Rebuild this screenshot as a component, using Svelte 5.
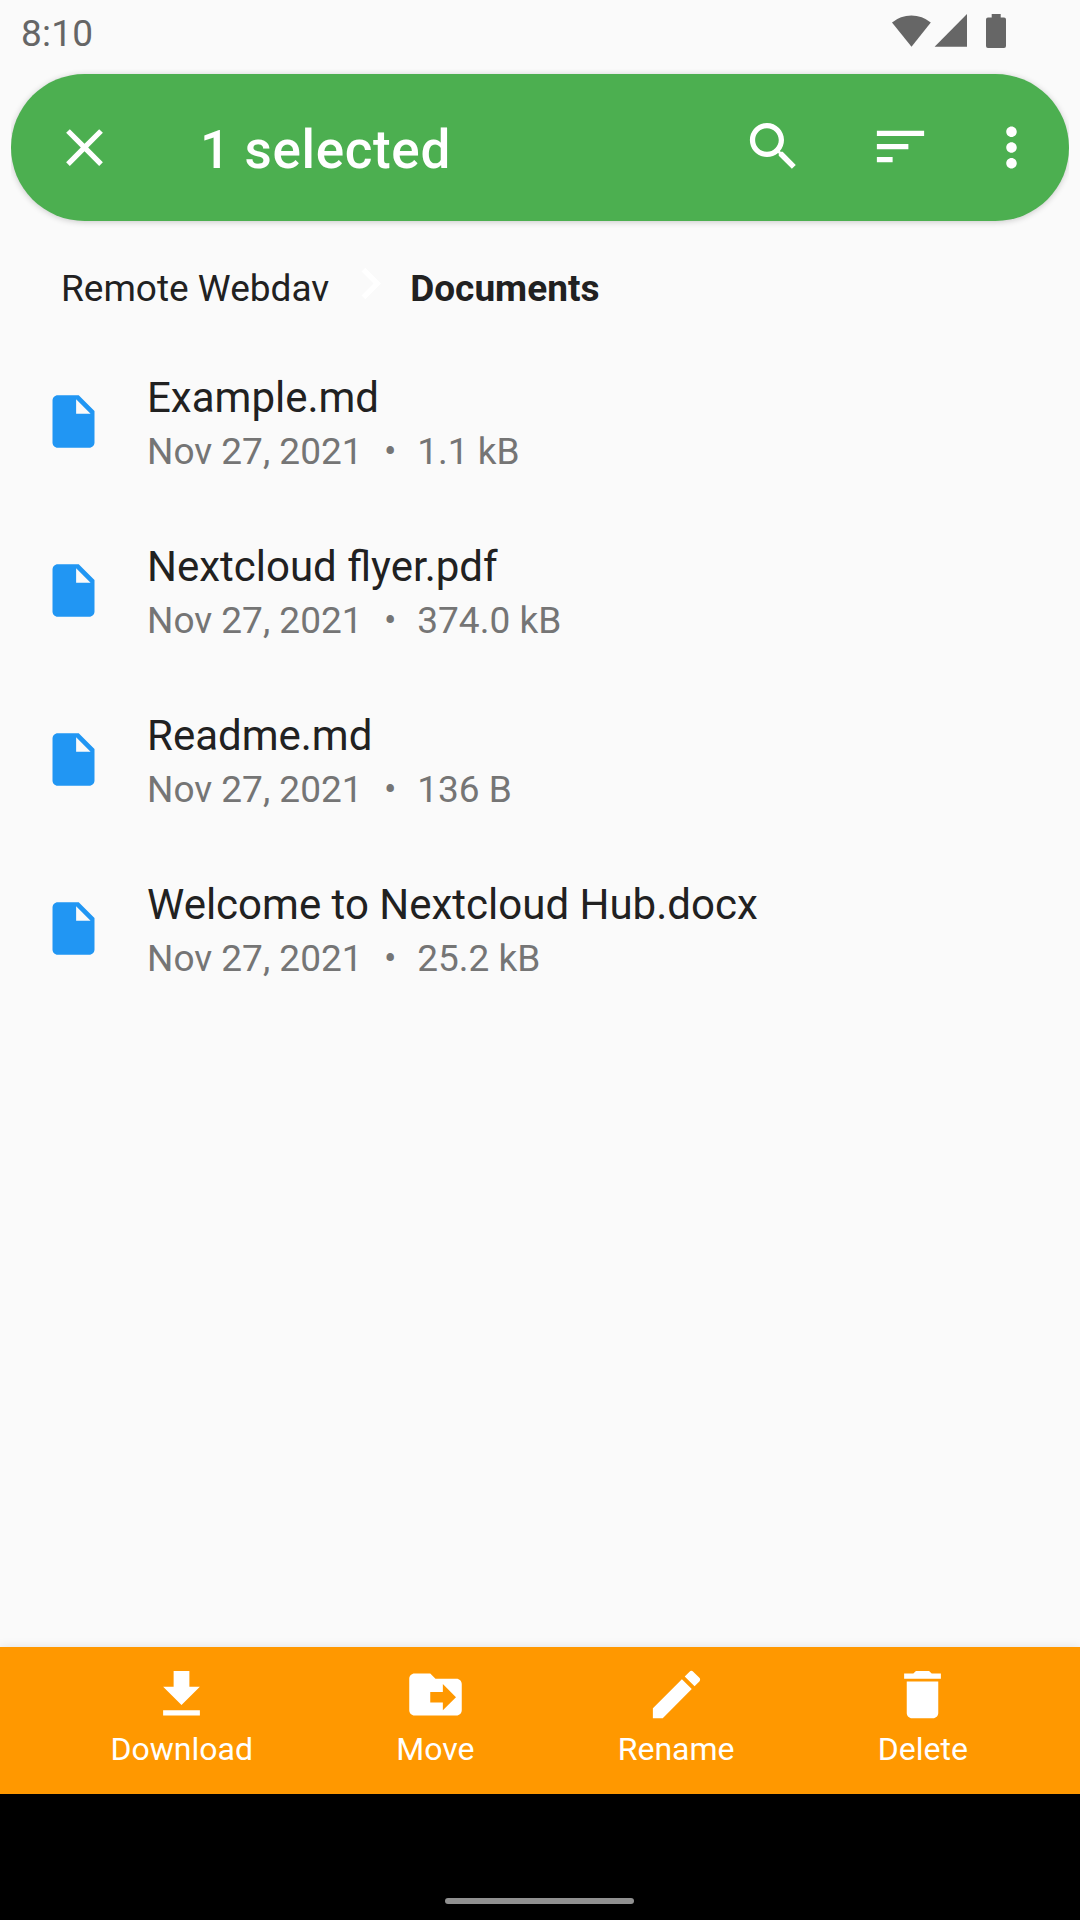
<script>
  const files = [
    { name: 'Example.md', date: 'Nov 27, 2021', size: '1.1 kB' },
    { name: 'Nextcloud flyer.pdf', date: 'Nov 27, 2021', size: '374.0 kB' },
    { name: 'Readme.md', date: 'Nov 27, 2021', size: '136 B' },
    { name: 'Welcome to Nextcloud Hub.docx', date: 'Nov 27, 2021', size: '25.2 kB' },
  ];

  const actions = [
    { label: 'Download', path: 'M19 9h-4V3H9v6H5l7 7 7-7zM5 18v2h14v-2H5z' },
    { label: 'Move', path: 'M20 6h-8l-2-2H4c-1.1 0-2 .9-2 2v12c0 1.1.9 2 2 2h16c1.1 0 2-.9 2-2V8c0-1.1-.9-2-2-2zm-5.2 12v-3H10v-4h4.8V8l5 5-5 5z' },
    { label: 'Rename', path: 'M3 17.25V21h3.75L17.81 9.94l-3.75-3.75L3 17.25zM20.71 7.04c.39-.39.39-1.02 0-1.41l-2.34-2.34c-.39-.39-1.02-.39-1.41 0l-1.83 1.83 3.75 3.75 1.83-1.83z' },
    { label: 'Delete', path: 'M6 19c0 1.1.9 2 2 2h8c1.1 0 2-.9 2-2V7H6v12zM19 4h-3.5l-1-1h-5l-1 1H5v2h14V4z' },
  ];
</script>

<div class="screen">
  <header class="status">
    <span class="time">8:10</span>
    <svg class="indicators" width="114" height="34" viewBox="0 0 114 34">
      <path d="M0 8.6A30 30 0 0 1 38.8 8.6L19.5 32.7z" />
      <path d="M42.6 32.7L75 0v32.7z" />
      <path d="M99.7 0h9v3.4h3.3q2 0 2 2V32q0 2-2 2H96q-2 0-2-2V5.4q0-2 2-2h3.7z" />
    </svg>
  </header>

  <div class="toolbar-clip">
    <div class="toolbar">
      <svg class="icon close" viewBox="0 0 24 24"><path d="M19 6.41L17.59 5 12 10.59 6.41 5 5 6.41 10.59 12 5 17.59 6.41 19 12 13.41 17.59 19 19 17.59 13.41 12z" /></svg>
      <h1>1 selected</h1>
      <svg class="icon search" viewBox="0 0 24 24"><path d="M15.5 14h-.79l-.28-.27C15.41 12.59 16 11.11 16 9.5 16 5.91 13.09 3 9.5 3S3 5.91 3 9.5 5.91 16 9.5 16c1.61 0 3.09-.59 4.23-1.57l.27.28v.79l5 4.99L20.49 19l-4.99-5zm-6 0C7.01 14 5 11.99 5 9.5S7.01 5 9.5 5 14 7.01 14 9.5 11.99 14 9.5 14z" /></svg>
      <svg class="icon sort" viewBox="0 0 24 24"><path d="M3 6h18v2H3zM3 11h12v2H3zM3 16h6v2H3z" /></svg>
      <svg class="icon more" viewBox="0 0 24 24"><path d="M12 8c1.1 0 2-.9 2-2s-.9-2-2-2-2 .9-2 2 .9 2 2 2zm0 2c-1.1 0-2 .9-2 2s.9 2 2 2 2-.9 2-2-.9-2-2-2zm0 6c-1.1 0-2 .9-2 2s.9 2 2 2 2-.9 2-2-.9-2-2-2z" /></svg>
    </div>
  </div>

  <nav class="crumbs">
    <span class="crumb">Remote Webdav</span>
    <svg class="icon chevron" viewBox="0 0 24 24"><path d="M10 6L8.59 7.41 13.17 12l-4.58 4.59L10 18l6-6z" /></svg>
    <span class="crumb current">Documents</span>
  </nav>

  <main>
    {#each files as file}
      <div class="file">
        <svg class="icon" viewBox="0 0 24 24"><path d="M6 2c-1.1 0-1.99.9-1.99 2L4 20c0 1.1.89 2 1.99 2H18c1.1 0 2-.9 2-2V8l-6-6H6zm7 7V3.5L18.5 9H13z" /></svg>
        <div class="info">
          <div class="name">{file.name}</div>
          <div class="meta">{file.date}<span class="dot">{'  •  '}</span>{file.size}</div>
        </div>
      </div>
    {/each}
  </main>

  <footer class="actions">
    {#each actions as action}
      <div class="action">
        <svg class="icon" viewBox="0 0 24 24"><path d={action.path} /></svg>
        <span class="label">{action.label}</span>
      </div>
    {/each}
  </footer>

  <div class="gesture"><div class="pill"></div></div>
</div>

<style>
  :global(body) {
    margin: 0;
    background: #fafafa;
  }

  .screen {
    width: 1080px;
    height: 1920px;
    display: flex;
    flex-direction: column;
    overflow: hidden;
    background: #fafafa;
    color: #212121;
    font-family: Roboto, sans-serif;
  }

  .icon {
    width: 63px;
    height: 63px;
    flex: none;
    display: block;
    fill: #fff;
  }

  .status {
    height: 63px;
    flex: none;
    box-sizing: border-box;
    padding: 0 74px 0 21px;
    display: flex;
    justify-content: space-between;
    color: #666;
  }

  .time {
    font-size: 37px;
    line-height: 67px;
    letter-spacing: 0.2px;
  }

  .indicators {
    margin-top: 14px;
    fill: #666;
  }

  /* Keeps the toolbar's shadow from spilling past its left and right edges. */
  .toolbar-clip {
    flex: none;
    margin: 0 11px;
    padding: 11px 0 12px;
    overflow: hidden;
  }

  .toolbar {
    height: 147px;
    box-sizing: border-box;
    padding: 0 26px 0 42px;
    display: flex;
    align-items: center;
    border-radius: 73.5px;
    background: #4caf50;
    box-shadow: 0 1px 6px rgba(0, 0, 0, 0.2);
  }

  h1 {
    margin: 5px 0 0 84px;
    flex: 1;
    font-size: 53px;
    line-height: 62px;
    font-weight: 500;
    letter-spacing: 0.65px;
    color: #fff;
  }

  .search,
  .sort {
    margin-bottom: 2px;
  }

  .sort {
    margin-left: 64px;
  }

  .more {
    margin-left: 48px;
  }

  .crumbs {
    height: 104px;
    flex: none;
    display: flex;
    align-items: center;
    padding-left: 61px;
  }

  .crumb {
    font-size: 37px;
    line-height: 44px;
    padding-top: 7px;
  }

  .chevron {
    margin: 0 8px 3px 10px;
  }

  .current {
    font-weight: 700;
  }

  main {
    flex: 1;
  }

  .file {
    height: 169px;
    display: flex;
    align-items: center;
    padding-left: 42px;
  }

  .file .icon {
    fill: #2196f3;
  }

  .info {
    margin-left: 42px;
    padding-top: 3px;
  }

  .name {
    font-size: 42px;
    line-height: 56px;
  }

  .meta {
    font-size: 37px;
    line-height: 51px;
    color: #757575;
    white-space: pre;
  }

  .dot {
    margin: 0 2.5px 0 3px;
  }

  .actions {
    height: 147px;
    flex: none;
    box-sizing: border-box;
    padding: 16px 112px 0 110.5px;
    display: flex;
    justify-content: space-between;
    background: #ff9800;
    box-shadow: 0 0 10px rgba(0, 0, 0, 0.1);
    color: #fff;
  }

  .action {
    display: flex;
    flex-direction: column;
    align-items: center;
  }

  .label {
    font-size: 32px;
    line-height: 38px;
    margin-top: 4px;
  }

  .gesture {
    height: 126px;
    flex: none;
    box-sizing: border-box;
    padding: 0 1px 16px 0;
    display: flex;
    justify-content: center;
    align-items: flex-end;
    background: #000;
  }

  .pill {
    width: 189px;
    height: 6px;
    border-radius: 3px;
    background: #909090;
  }
</style>
